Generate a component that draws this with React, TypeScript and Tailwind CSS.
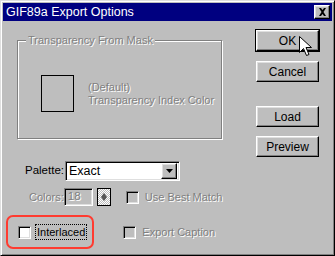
import React from "react";

const font = "font-['Liberation_Sans',Arial,sans-serif]";
const etched = "text-[#808080] [text-shadow:1px_1px_0_#fff]";
const raised =
  "border border-t-white border-l-white border-r-black border-b-black shadow-[inset_-1px_-1px_0_#808080,inset_1px_1px_0_#dfdfdf]";
const sunken =
  "border border-t-[#808080] border-l-[#808080] border-r-white border-b-white shadow-[inset_1px_1px_0_#000,inset_-1px_-1px_0_#dfdfdf]";

const Button = ({ label, def }: { label: string; def?: boolean }) => (
  <div className={def ? "border border-black" : "border border-transparent"}>
    <div
      className={`${raised} w-[63px] h-[21px] bg-[#bebebe] flex items-center justify-center text-[12px] text-black`}
    >
      {label}
    </div>
  </div>
);

const Check = ({ label, disabled, focus }: { label: string; disabled?: boolean; focus?: boolean }) => (
  <div className="flex items-center gap-[5px]">
    <div className={`${sunken} w-[13px] h-[13px] ${disabled ? "bg-[#bebebe]" : "bg-white"}`} />
    <span
      className={`text-[11px] leading-[14px] px-[1px] ${disabled ? etched : "text-black"} ${
        focus ? "outline outline-1 outline-dotted outline-black" : ""
      }`}
    >
      {label}
    </span>
  </div>
);

export default function App() {
  return (
    <div
      className={`${font} relative w-[335px] h-[256px] overflow-hidden bg-[#bebebe] border border-t-[#dfdfdf] border-l-[#dfdfdf] border-r-black border-b-black shadow-[inset_1px_1px_0_#fff,inset_-1px_-1px_0_#808080] p-[2px]`}
    >
      {/* title bar */}
      <div className="h-[18px] bg-[#000080] flex items-center justify-between pl-[3px] pr-[2px]">
        <span className="text-white text-[12.5px] leading-none">GIF89a Export Options</span>
        <div className={`${raised} w-[16px] h-[14px] bg-[#bebebe] flex items-center justify-center`}>
          <svg width="9" height="8" viewBox="0 0 9 8">
            <path d="M1 0h2l1.5 2 1.5-2h2L5.5 4 8 8H6L4.5 6 3 8H1l2.5-4z" fill="#000" />
          </svg>
        </div>
      </div>

      <div className="flex">
        {/* left column */}
        <div className="pl-[14px] w-[251px]">
          {/* group box */}
          <div className="relative mt-[19px] w-[205px] h-[99px] border border-[#808080] shadow-[inset_1px_1px_0_#fff,1px_1px_0_#fff]">
            <span className={`absolute -top-[8px] left-[8px] px-[2px] bg-[#bebebe] text-[11px] leading-[14px] ${etched}`}>
              Transparency From Mask
            </span>
            <div className="flex items-center mt-[34px] ml-[23px] gap-[14px]">
              <div className="w-[33px] h-[37px] border border-black" />
              <div className={`text-[11px] leading-[13px] ${etched}`}>
                <div>(Default)</div>
                <div>Transparency Index Color</div>
              </div>
            </div>
          </div>

          {/* palette */}
          <div className="flex items-center mt-[22px] ml-[8px] gap-[1px]">
            <span className="text-[11.5px] text-black">Palette:</span>
            <div className={`${sunken} w-[115px] h-[20px] bg-white flex items-center justify-between pl-[3px] pr-[2px]`}>
              <span className="text-[12.5px] text-black">Exact</span>
              <div className={`${raised} w-[16px] h-[16px] bg-[#bebebe] flex items-center justify-center`}>
                <svg width="7" height="4" viewBox="0 0 7 4">
                  <path d="M0 0h7L3.5 4z" fill="#000" />
                </svg>
              </div>
            </div>
          </div>

          {/* colors */}
          <div className="flex items-center mt-[7px] ml-[12px]">
            <span className={`text-[11px] ${etched}`}>Colors:</span>
            <div className={`${sunken} w-[29px] h-[18px] bg-[#bebebe] flex items-center pl-[3px]`}>
              <span className={`text-[11.5px] ${etched}`}>18</span>
            </div>
            <div className="ml-[4px] w-[14px] h-[18px] border border-black bg-[repeating-conic-gradient(#fff_0_25%,#bebebe_0_50%)] bg-[length:2px_2px] flex items-center justify-center">
              <svg width="6" height="8" viewBox="0 0 6 8">
                <path d="M3 0L6 4 3 8 0 4z" fill="#555" />
              </svg>
            </div>
            <div className="ml-[15px]">
              <Check label="Use Best Match" disabled />
            </div>
          </div>

          {/* interlaced */}
          <div className="flex items-center mt-[19px] ml-[1px]">
            <Check label="Interlaced" focus />
            <div className="ml-[37px]">
              <Check label="Export Caption" disabled />
            </div>
          </div>
        </div>

        {/* right buttons */}
        <div className="flex flex-col mt-[8px] ml-[1px]">
          <Button label="OK" def />
          <div className="mt-[8px]">
            <Button label="Cancel" />
          </div>
          <div className="mt-[22px]">
            <Button label="Load" />
          </div>
          <div className="mt-[7px]">
            <Button label="Preview" />
          </div>
        </div>
      </div>

      {/* highlight annotation */}
      <div className="absolute left-[5px] top-[214px] w-[88px] h-[34px] rounded-[7px] border-2 border-[#ff3b30]" />

      {/* mouse cursor */}
      <svg className="absolute left-[298px] top-[35px]" width="13" height="21" viewBox="0 0 13 21">
        <path d="M0.5 0.5v16l4-4 3 7 2.5-1-3-7h5.5z" fill="#fff" stroke="#000" strokeWidth="1" />
      </svg>
    </div>
  );
}
